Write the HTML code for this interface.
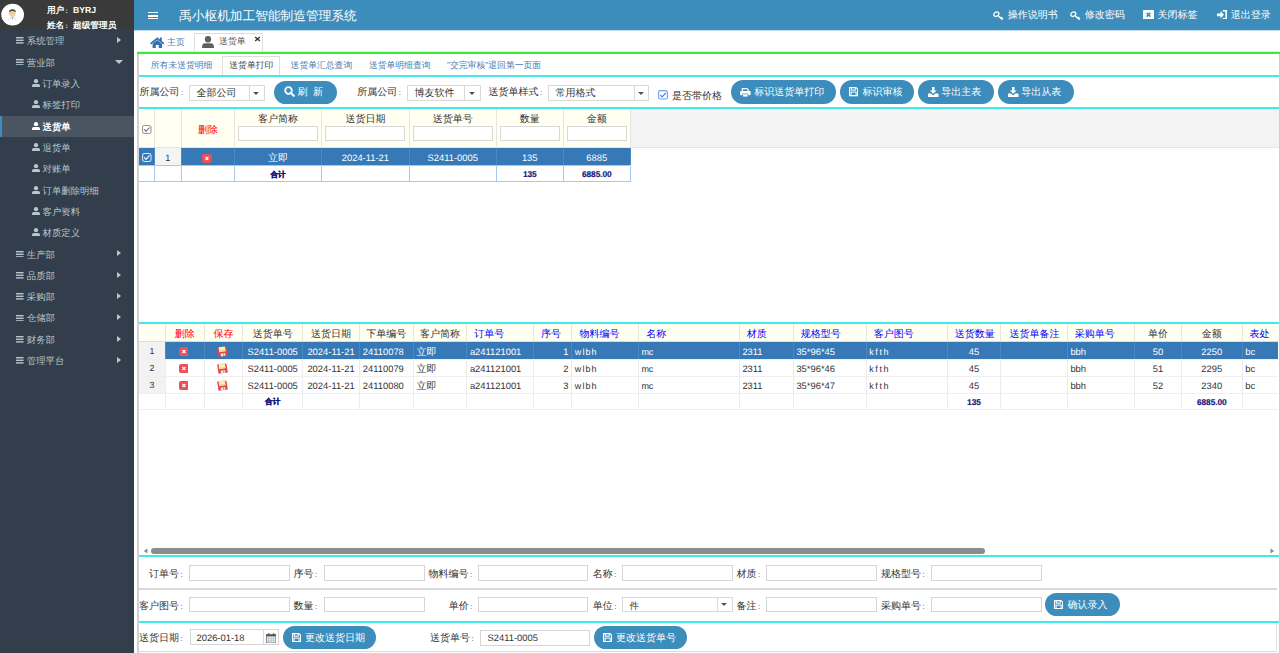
<!DOCTYPE html><html><head><meta charset="utf-8"><style>
*{box-sizing:border-box;margin:0;padding:0}
html,body{width:1280px;height:653px;overflow:hidden;background:#fff;font-family:"Liberation Sans",sans-serif;text-rendering:geometricPrecision}
.a{position:absolute}
.t{position:absolute;white-space:nowrap;line-height:1}
.c{display:inline-block;width:1.333em;padding-left:.2em;font-size:.75em}
.ham{position:absolute;width:7.5px;height:6.4px;border-top:1.5px solid #b8c7ce;border-bottom:1.5px solid #b8c7ce}
.ham:after{content:"";position:absolute;left:0;right:0;top:0.95px;height:1.5px;background:#b8c7ce}
.arr{position:absolute;width:0;height:0;border-top:3.6px solid transparent;border-bottom:3.6px solid transparent;border-left:4.2px solid #b8c7ce}
.arrd{position:absolute;width:0;height:0;border-left:4.2px solid transparent;border-right:4.2px solid transparent;border-top:4.2px solid #b8c7ce}
.sel{position:absolute;background:#fff;border:1px solid #d9d9d9}
.sel .sp{position:absolute;top:0;bottom:0;border-left:1px solid #d9d9d9}
.tri{position:absolute;width:0;height:0;border-left:3.6px solid transparent;border-right:3.6px solid transparent;border-top:3.6px solid #555}
.btn{position:absolute;background:#3c8dbc;border-radius:12px}
.cy{position:absolute;height:2.4px;background:#3eeaea}
.inp{position:absolute;background:#fff;border:1px solid #d5d5d5}
</style></head><body>
<div class="a" style="left:0.00px;top:0.00px;width:134.00px;height:653.00px;background:#323e4b"></div>
<div class="a" style="left:0.00px;top:0.00px;width:134.00px;height:30.00px;background:#3a3a3a"></div>
<svg class="a" style="left:0;top:0" width="30" height="30" viewBox="0 0 30 30">
<ellipse cx="12.6" cy="14.6" rx="11.4" ry="10.9" fill="#fff"/>
<path d="M8.3 20.6 Q9 17.6 12.4 17.4 Q15.8 17.6 16.5 20.6" fill="none" stroke="#d8dde0" stroke-width="0.9"/>
<path d="M11.8 17.6 L12.4 20.2 L13 17.6Z" fill="#3a9ab8"/>
<ellipse cx="12.4" cy="13.6" rx="3.3" ry="3.7" fill="#f1d2b2"/>
<path d="M9 12.6 Q8.8 9.2 12.4 9.2 Q16 9.2 15.8 12.6 Q15.2 10.9 12.4 11 Q9.6 10.9 9 12.6Z" fill="#5a4030"/>
<path d="M10.6 13.2 H11.6 M13.2 13.2 H14.2" stroke="#a08070" stroke-width="0.5"/>
</svg>
<div class="t" style="left:46.90px;top:6px;font-size:8.7px;color:#fff;font-weight:bold">用户<span class="c">:</span>BYRJ</div>
<div class="t" style="left:46.90px;top:21px;font-size:8.7px;color:#fff;font-weight:bold">姓名<span class="c">:</span>超级管理员</div>
<svg class="a" style="left:16.1px;top:37.40px" width="7.6" height="6.6" viewBox="0 0 7.6 6.6"><rect x="0" y="0" width="7.6" height="1.4" fill="#b8c7ce"/><rect x="0" y="2.6" width="7.6" height="1.4" fill="#b8c7ce"/><rect x="0" y="5.2" width="7.6" height="1.4" fill="#b8c7ce"/></svg>
<div class="t" style="left:26.80px;top:36px;font-size:9.4px;color:#b8c7ce;">系统管理</div>
<div class="arr" style="left:116.8px;top:37.10px"></div>
<svg class="a" style="left:16.1px;top:58.73px" width="7.6" height="6.6" viewBox="0 0 7.6 6.6"><rect x="0" y="0" width="7.6" height="1.4" fill="#b8c7ce"/><rect x="0" y="2.6" width="7.6" height="1.4" fill="#b8c7ce"/><rect x="0" y="5.2" width="7.6" height="1.4" fill="#b8c7ce"/></svg>
<div class="t" style="left:26.80px;top:58px;font-size:9.4px;color:#b8c7ce;">营业部</div>
<div class="arrd" style="left:115.3px;top:60.43px"></div>
<svg class="a" style="left:32.00px;top:78.91px" width="8" height="8.2" viewBox="0 0 8 8.2"><circle cx="4" cy="2.15" r="2.15" fill="#b8c7ce"/><path d="M0 8.2 V6.6 Q0 4.9 1.8 4.9 H6.2 Q8 4.9 8 6.6 V8.2Z" fill="#b8c7ce"/></svg>
<div class="t" style="left:42.50px;top:79px;font-size:9.4px;color:#b8c7ce;">订单录入</div>
<svg class="a" style="left:32.00px;top:100.24px" width="8" height="8.2" viewBox="0 0 8 8.2"><circle cx="4" cy="2.15" r="2.15" fill="#b8c7ce"/><path d="M0 8.2 V6.6 Q0 4.9 1.8 4.9 H6.2 Q8 4.9 8 6.6 V8.2Z" fill="#b8c7ce"/></svg>
<div class="t" style="left:42.50px;top:100px;font-size:9.4px;color:#b8c7ce;">标签打印</div>
<div class="a" style="left:0.00px;top:115.70px;width:134.00px;height:21.60px;background:#4a5562"></div>
<div class="a" style="left:0.00px;top:115.70px;width:2.20px;height:21.60px;background:#3c8dbc"></div>
<svg class="a" style="left:32.00px;top:121.57px" width="8" height="8.2" viewBox="0 0 8 8.2"><circle cx="4" cy="2.15" r="2.15" fill="#fff"/><path d="M0 8.2 V6.6 Q0 4.9 1.8 4.9 H6.2 Q8 4.9 8 6.6 V8.2Z" fill="#fff"/></svg>
<div class="t" style="left:42.50px;top:122px;font-size:9.4px;color:#fff;font-weight:bold">送货单</div>
<svg class="a" style="left:32.00px;top:142.90px" width="8" height="8.2" viewBox="0 0 8 8.2"><circle cx="4" cy="2.15" r="2.15" fill="#b8c7ce"/><path d="M0 8.2 V6.6 Q0 4.9 1.8 4.9 H6.2 Q8 4.9 8 6.6 V8.2Z" fill="#b8c7ce"/></svg>
<div class="t" style="left:42.50px;top:143px;font-size:9.4px;color:#b8c7ce;">退货单</div>
<svg class="a" style="left:32.00px;top:164.23px" width="8" height="8.2" viewBox="0 0 8 8.2"><circle cx="4" cy="2.15" r="2.15" fill="#b8c7ce"/><path d="M0 8.2 V6.6 Q0 4.9 1.8 4.9 H6.2 Q8 4.9 8 6.6 V8.2Z" fill="#b8c7ce"/></svg>
<div class="t" style="left:42.50px;top:164px;font-size:9.4px;color:#b8c7ce;">对账单</div>
<svg class="a" style="left:32.00px;top:185.56px" width="8" height="8.2" viewBox="0 0 8 8.2"><circle cx="4" cy="2.15" r="2.15" fill="#b8c7ce"/><path d="M0 8.2 V6.6 Q0 4.9 1.8 4.9 H6.2 Q8 4.9 8 6.6 V8.2Z" fill="#b8c7ce"/></svg>
<div class="t" style="left:42.50px;top:186px;font-size:9.4px;color:#b8c7ce;">订单删除明细</div>
<svg class="a" style="left:32.00px;top:206.89px" width="8" height="8.2" viewBox="0 0 8 8.2"><circle cx="4" cy="2.15" r="2.15" fill="#b8c7ce"/><path d="M0 8.2 V6.6 Q0 4.9 1.8 4.9 H6.2 Q8 4.9 8 6.6 V8.2Z" fill="#b8c7ce"/></svg>
<div class="t" style="left:42.50px;top:207px;font-size:9.4px;color:#b8c7ce;">客户资料</div>
<svg class="a" style="left:32.00px;top:228.22px" width="8" height="8.2" viewBox="0 0 8 8.2"><circle cx="4" cy="2.15" r="2.15" fill="#b8c7ce"/><path d="M0 8.2 V6.6 Q0 4.9 1.8 4.9 H6.2 Q8 4.9 8 6.6 V8.2Z" fill="#b8c7ce"/></svg>
<div class="t" style="left:42.50px;top:228px;font-size:9.4px;color:#b8c7ce;">材质定义</div>
<svg class="a" style="left:16.1px;top:250.70px" width="7.6" height="6.6" viewBox="0 0 7.6 6.6"><rect x="0" y="0" width="7.6" height="1.4" fill="#b8c7ce"/><rect x="0" y="2.6" width="7.6" height="1.4" fill="#b8c7ce"/><rect x="0" y="5.2" width="7.6" height="1.4" fill="#b8c7ce"/></svg>
<div class="t" style="left:26.80px;top:250px;font-size:9.4px;color:#b8c7ce;">生产部</div>
<div class="arr" style="left:116.8px;top:250.40px"></div>
<svg class="a" style="left:16.1px;top:272.03px" width="7.6" height="6.6" viewBox="0 0 7.6 6.6"><rect x="0" y="0" width="7.6" height="1.4" fill="#b8c7ce"/><rect x="0" y="2.6" width="7.6" height="1.4" fill="#b8c7ce"/><rect x="0" y="5.2" width="7.6" height="1.4" fill="#b8c7ce"/></svg>
<div class="t" style="left:26.80px;top:271px;font-size:9.4px;color:#b8c7ce;">品质部</div>
<div class="arr" style="left:116.8px;top:271.73px"></div>
<svg class="a" style="left:16.1px;top:293.36px" width="7.6" height="6.6" viewBox="0 0 7.6 6.6"><rect x="0" y="0" width="7.6" height="1.4" fill="#b8c7ce"/><rect x="0" y="2.6" width="7.6" height="1.4" fill="#b8c7ce"/><rect x="0" y="5.2" width="7.6" height="1.4" fill="#b8c7ce"/></svg>
<div class="t" style="left:26.80px;top:292px;font-size:9.4px;color:#b8c7ce;">采购部</div>
<div class="arr" style="left:116.8px;top:293.06px"></div>
<svg class="a" style="left:16.1px;top:314.69px" width="7.6" height="6.6" viewBox="0 0 7.6 6.6"><rect x="0" y="0" width="7.6" height="1.4" fill="#b8c7ce"/><rect x="0" y="2.6" width="7.6" height="1.4" fill="#b8c7ce"/><rect x="0" y="5.2" width="7.6" height="1.4" fill="#b8c7ce"/></svg>
<div class="t" style="left:26.80px;top:313px;font-size:9.4px;color:#b8c7ce;">仓储部</div>
<div class="arr" style="left:116.8px;top:314.39px"></div>
<svg class="a" style="left:16.1px;top:336.02px" width="7.6" height="6.6" viewBox="0 0 7.6 6.6"><rect x="0" y="0" width="7.6" height="1.4" fill="#b8c7ce"/><rect x="0" y="2.6" width="7.6" height="1.4" fill="#b8c7ce"/><rect x="0" y="5.2" width="7.6" height="1.4" fill="#b8c7ce"/></svg>
<div class="t" style="left:26.80px;top:335px;font-size:9.4px;color:#b8c7ce;">财务部</div>
<div class="arr" style="left:116.8px;top:335.72px"></div>
<svg class="a" style="left:16.1px;top:357.35px" width="7.6" height="6.6" viewBox="0 0 7.6 6.6"><rect x="0" y="0" width="7.6" height="1.4" fill="#b8c7ce"/><rect x="0" y="2.6" width="7.6" height="1.4" fill="#b8c7ce"/><rect x="0" y="5.2" width="7.6" height="1.4" fill="#b8c7ce"/></svg>
<div class="t" style="left:26.80px;top:356px;font-size:9.4px;color:#b8c7ce;">管理平台</div>
<div class="arr" style="left:116.8px;top:357.05px"></div>
<div class="a" style="left:134.00px;top:0.00px;width:1146.00px;height:30.00px;background:#3c8dbc"></div>
<div class="a" style="left:134.00px;top:30.00px;width:1146.00px;height:1.00px;background:#c4dbec"></div>
<div class="a" style="left:148px;top:12.2px;width:10px;height:7.2px;border-top:1.7px solid #fff;border-bottom:1.7px solid #fff"></div>
<div class="a" style="left:148.00px;top:14.95px;width:10.00px;height:1.70px;background:#fff"></div>
<div class="t" style="left:179.10px;top:10px;font-size:12.7px;color:#fff;">禹小枢机加工智能制造管理系统</div>
<svg class="a" style="left:992.80px;top:10.60px" width="11" height="9.6" viewBox="0 0 11 9.6"><ellipse cx="3.3" cy="3.2" rx="2.7" ry="2.0" transform="rotate(-35 3.3 3.2)" fill="none" stroke="#fff" stroke-width="1.3"/><path d="M4.9 4.6 L9.6 8.9 M7.5 7 L8.7 5.9 M8.6 8 L9.9 6.9" stroke="#fff" stroke-width="1.4"/></svg>
<div class="t" style="left:1007.80px;top:11px;font-size:10.0px;color:#fff;">操作说明书</div>
<svg class="a" style="left:1069.80px;top:10.60px" width="11" height="9.6" viewBox="0 0 11 9.6"><ellipse cx="3.3" cy="3.2" rx="2.7" ry="2.0" transform="rotate(-35 3.3 3.2)" fill="none" stroke="#fff" stroke-width="1.3"/><path d="M4.9 4.6 L9.6 8.9 M7.5 7 L8.7 5.9 M8.6 8 L9.9 6.9" stroke="#fff" stroke-width="1.4"/></svg>
<div class="t" style="left:1084.80px;top:11px;font-size:10.0px;color:#fff;">修改密码</div>
<svg class="a" style="left:1142.9px;top:9.8px" width="11" height="9.4" viewBox="0 0 11 9.4"><rect x="0" y="0" width="11" height="9.4" rx="1" fill="#fff"/><path d="M3.6 2.8 L7.4 6.6 M7.4 2.8 L3.6 6.6" stroke="#3c8dbc" stroke-width="1.6"/></svg>
<div class="t" style="left:1157.40px;top:11px;font-size:10.0px;color:#fff;">关闭标签</div>
<svg class="a" style="left:1216.7px;top:9.8px" width="10" height="9.6" viewBox="0 0 10 9.6"><path d="M0 3.4 H3.6 V1.1 L7 4.8 L3.6 8.5 V6.2 H0Z" fill="#fff"/><path d="M5.8 0.8 H9.2 V8.8 H5.8" fill="none" stroke="#fff" stroke-width="1.6"/></svg>
<div class="t" style="left:1230.80px;top:11px;font-size:10.0px;color:#fff;">退出登录</div>
<svg class="a" style="left:149.7px;top:36.8px" width="14.6" height="11" viewBox="0 0 14.6 11"><path d="M7.3 0.2 L0 6.2 L1.3 7.5 L7.3 2.6 L13.3 7.5 L14.6 6.2 L11.8 3.9 V0.6 H10 V2.4Z" fill="#2f73b5"/><path d="M2.6 6.8 L7.3 3 L12 6.8 V11 H8.8 V8 H5.8 V11 H2.6Z" fill="#2f73b5"/></svg>
<div class="t" style="left:167.00px;top:38px;font-size:8.9px;color:#5a80ab;">主页</div>
<div class="a" style="left:194.20px;top:33.30px;width:69.10px;height:18.90px;background:#fff;border:1px solid #dedede;border-bottom:none"></div>
<svg class="a" style="left:202.4px;top:36.1px" width="12" height="12.2" viewBox="0 0 12 12.2"><ellipse cx="6" cy="3.2" rx="3.1" ry="3.2" fill="#5f5f5f"/><path d="M0.1 12.2 V10.6 Q0.1 7.2 3.3 7.2 H8.7 Q11.9 7.2 11.9 10.6 V12.2Z" fill="#5f5f5f"/></svg>
<div class="t" style="left:219.00px;top:37px;font-size:8.9px;color:#555;">送货单</div>
<svg class="a" style="left:254px;top:36px" width="7" height="6" viewBox="0 0 7 6"><path d="M1.2 1 L5.8 5 M5.8 1 L1.2 5" stroke="#3a3a3a" stroke-width="1.5"/></svg>
<div class="a" style="left:136.90px;top:52.00px;width:1.80px;height:601.00px;background:#d2d2d2"></div>
<div class="a" style="left:1279.00px;top:54.00px;width:1.00px;height:599.00px;background:#cfcfcf"></div>
<div class="a" style="left:137.00px;top:51.00px;width:1142.50px;height:1.00px;background:#ece8e8"></div>
<div class="a" style="left:137.00px;top:52.00px;width:1142.50px;height:2.00px;background:#33ee33"></div>
<div class="t" style="left:150.80px;top:61px;font-size:8.8px;color:#4a7cb4;">所有未送货明细</div>
<div class="a" style="left:222.00px;top:56.30px;width:57.70px;height:19.70px;background:#fff;border:1px solid #dedede;border-bottom:none"></div>
<div class="t" style="left:229.30px;top:61px;font-size:8.8px;color:#444;">送货单打印</div>
<div class="t" style="left:290.60px;top:61px;font-size:8.8px;color:#4a7cb4;">送货单汇总查询</div>
<div class="t" style="left:368.90px;top:61px;font-size:8.8px;color:#4a7cb4;">送货单明细查询</div>
<div class="t" style="left:446.90px;top:61px;font-size:8.8px;color:#4a7cb4;">"交完审核"退回第一页面</div>
<div class="cy" style="left:138.7px;top:75.1px;width:1140.3px"></div>
<div class="t" style="left:139.50px;top:88px;font-size:10.0px;color:#333;">所属公司<span class="c">:</span></div>
<div class="sel" style="left:189.00px;top:85.30px;width:76.30px;height:15.70px"><div class="sp" style="left:58.80px"></div><div class="tri" style="left:63.45px;top:5.25px"></div></div>
<div class="t" style="left:196.50px;top:89px;font-size:10.0px;color:#333;">全部公司</div>
<div class="btn" style="left:273.80px;top:80.50px;width:63.00px;height:23.50px"></div>
<svg class="a" style="left:284.40px;top:86.45px" width="11" height="11" viewBox="0 0 11 11"><circle cx="4.5" cy="4.5" r="3.3" fill="none" stroke="#fff" stroke-width="1.8"/><path d="M7 7 L9.8 9.8" stroke="#fff" stroke-width="2.1" stroke-linecap="round"/></svg>
<div class="t" style="left:297.50px;top:88px;font-size:10.0px;color:#fff;">刷&nbsp;&nbsp;新</div>
<div class="t" style="left:357.20px;top:88px;font-size:10.0px;color:#333;">所属公司<span class="c">:</span></div>
<div class="sel" style="left:407.20px;top:85.30px;width:73.40px;height:15.70px"><div class="sp" style="left:56.20px"></div><div class="tri" style="left:60.70px;top:5.25px"></div></div>
<div class="t" style="left:414.50px;top:89px;font-size:10.0px;color:#333;">博友软件</div>
<div class="t" style="left:488.40px;top:88px;font-size:10.0px;color:#333;">送货单样式<span class="c">:</span></div>
<div class="sel" style="left:548.40px;top:85.30px;width:101.00px;height:15.70px"><div class="sp" style="left:84.35px"></div><div class="tri" style="left:88.58px;top:5.25px"></div></div>
<div class="t" style="left:555.50px;top:89px;font-size:10.0px;color:#333;">常用格式</div>
<svg class="a" style="left:657.8px;top:90.2px" width="10" height="9.6" viewBox="0 0 10 9.6"><rect x="0.6" y="0.6" width="8.8" height="8.4" rx="1.8" fill="#fff" stroke="#6f9cf0" stroke-width="1.1"/><path d="M2.3 5 L4.2 6.9 L7.8 2.9" fill="none" stroke="#4a82e0" stroke-width="1.2"/></svg>
<div class="t" style="left:671.90px;top:92px;font-size:10.0px;color:#333;">是否带价格</div>
<div class="btn" style="left:730.90px;top:80.20px;width:105.35px;height:23.60px"></div>
<svg class="a" style="left:739.90px;top:87.60px" width="10.7" height="9.2" viewBox="0 0 10.7 9.2"><path d="M2.4 3.2 V0.6 H7 L8.3 1.9 V3.2" fill="none" stroke="#fff" stroke-width="1.2"/><rect x="0" y="3" width="10.7" height="4.3" rx="1.3" fill="#fff"/><rect x="2.4" y="5.6" width="5.9" height="3.6" fill="#3c8dbc"/><rect x="3.1" y="6.3" width="4.5" height="2.3" fill="#fff"/></svg>
<div class="t" style="left:754.20px;top:88px;font-size:10.0px;color:#fff;">标识送货单打印</div>
<div class="btn" style="left:839.70px;top:80.20px;width:74.70px;height:23.60px"></div>
<svg class="a" style="left:849.20px;top:87.40px" width="9.2" height="9.2" viewBox="0 0 9.2 9.2"><path d="M0.6 0.6 H7 L8.6 2.2 V8.6 H0.6Z" fill="none" stroke="#fff" stroke-width="1.2"/><rect x="2.4" y="0.6" width="3.9" height="2.6" fill="none" stroke="#fff" stroke-width="1"/><rect x="2.1" y="5.1" width="5" height="3.5" fill="none" stroke="#fff" stroke-width="1"/></svg>
<div class="t" style="left:862.50px;top:88px;font-size:10.0px;color:#fff;">标识审核</div>
<div class="btn" style="left:917.80px;top:80.20px;width:76.60px;height:23.60px"></div>
<svg class="a" style="left:928.00px;top:86.70px" width="10.5" height="10" viewBox="0 0 10.5 10"><path d="M4 0 H6.5 V3.4 H8.6 L5.25 6.8 L1.9 3.4 H4Z" fill="#fff"/><path d="M0 6.4 H3.1 L5.25 8.5 L7.4 6.4 H10.5 V10 H0Z" fill="#fff"/></svg>
<div class="t" style="left:941.30px;top:88px;font-size:10.0px;color:#fff;">导出主表</div>
<div class="btn" style="left:997.80px;top:80.20px;width:76.20px;height:23.60px"></div>
<svg class="a" style="left:1008.00px;top:86.70px" width="10.5" height="10" viewBox="0 0 10.5 10"><path d="M4 0 H6.5 V3.4 H8.6 L5.25 6.8 L1.9 3.4 H4Z" fill="#fff"/><path d="M0 6.4 H3.1 L5.25 8.5 L7.4 6.4 H10.5 V10 H0Z" fill="#fff"/></svg>
<div class="t" style="left:1021.30px;top:88px;font-size:10.0px;color:#fff;">导出从表</div>
<div class="cy" style="left:138.7px;top:106.6px;width:1140.3px"></div>
<div class="a" style="left:138.70px;top:109.00px;width:1140.30px;height:39.00px;background:#f3f3f3"></div>
<div class="a" style="left:138.70px;top:109.00px;width:491.70px;height:39.00px;background:#fffff2"></div>
<div class="a" style="left:153.80px;top:109.00px;width:1.00px;height:39.00px;background:#e6e6dc"></div>
<div class="a" style="left:180.80px;top:109.00px;width:1.00px;height:39.00px;background:#e6e6dc"></div>
<div class="a" style="left:234.00px;top:109.00px;width:1.00px;height:39.00px;background:#e6e6dc"></div>
<div class="a" style="left:321.20px;top:109.00px;width:1.00px;height:39.00px;background:#e6e6dc"></div>
<div class="a" style="left:408.60px;top:109.00px;width:1.00px;height:39.00px;background:#e6e6dc"></div>
<div class="a" style="left:495.80px;top:109.00px;width:1.00px;height:39.00px;background:#e6e6dc"></div>
<div class="a" style="left:562.70px;top:109.00px;width:1.00px;height:39.00px;background:#e6e6dc"></div>
<div class="a" style="left:629.90px;top:109.00px;width:1.00px;height:39.00px;background:#e6e6dc"></div>
<div class="a" style="left:138.70px;top:147.00px;width:1140.30px;height:1.00px;background:#e6e6dc"></div>
<svg class="a" style="left:142px;top:124.6px" width="9.6" height="9" viewBox="0 0 10 9.4"><rect x="0.6" y="0.6" width="8.8" height="8.2" rx="1.6" fill="#fff" stroke="#8a8a8a" stroke-width="1"/><path d="M2.3 4.6 L4.2 6.6 L7.8 2.6" fill="none" stroke="#666" stroke-width="1.1"/></svg>
<div class="t" style="left:181.30px;top:126px;font-size:10.0px;color:#f00;width:53.20px;text-align:center;">删除</div>
<div class="t" style="left:234.50px;top:115px;font-size:10.0px;color:#333;width:87.20px;text-align:center;">客户简称</div>
<div class="inp" style="left:238.20px;top:126.4px;width:79.80px;height:14.8px;border-color:#d8d8d8"></div>
<div class="t" style="left:321.70px;top:115px;font-size:10.0px;color:#333;width:87.40px;text-align:center;">送货日期</div>
<div class="inp" style="left:325.40px;top:126.4px;width:80.00px;height:14.8px;border-color:#d8d8d8"></div>
<div class="t" style="left:409.10px;top:115px;font-size:10.0px;color:#333;width:87.20px;text-align:center;">送货单号</div>
<div class="inp" style="left:412.80px;top:126.4px;width:79.80px;height:14.8px;border-color:#d8d8d8"></div>
<div class="t" style="left:496.30px;top:115px;font-size:10.0px;color:#333;width:66.90px;text-align:center;">数量</div>
<div class="inp" style="left:500.00px;top:126.4px;width:59.50px;height:14.8px;border-color:#d8d8d8"></div>
<div class="t" style="left:563.20px;top:115px;font-size:10.0px;color:#333;width:67.20px;text-align:center;">金额</div>
<div class="inp" style="left:566.90px;top:126.4px;width:59.80px;height:14.8px;border-color:#d8d8d8"></div>
<div class="a" style="left:138.70px;top:148.00px;width:491.70px;height:17.00px;background:#3779b7"></div>
<div class="a" style="left:154.80px;top:148.00px;width:26.30px;height:17.00px;background:#f4f4f4"></div>
<div class="a" style="left:153.80px;top:148.00px;width:1.00px;height:17.00px;background:#4a88c2"></div>
<div class="a" style="left:180.80px;top:148.00px;width:1.00px;height:17.00px;background:#4a88c2"></div>
<div class="a" style="left:234.00px;top:148.00px;width:1.00px;height:17.00px;background:#4a88c2"></div>
<div class="a" style="left:321.20px;top:148.00px;width:1.00px;height:17.00px;background:#4a88c2"></div>
<div class="a" style="left:408.60px;top:148.00px;width:1.00px;height:17.00px;background:#4a88c2"></div>
<div class="a" style="left:495.80px;top:148.00px;width:1.00px;height:17.00px;background:#4a88c2"></div>
<div class="a" style="left:562.70px;top:148.00px;width:1.00px;height:17.00px;background:#4a88c2"></div>
<div class="a" style="left:629.90px;top:148.00px;width:1.00px;height:17.00px;background:#4a88c2"></div>
<div class="a" style="left:138.70px;top:165.00px;width:491.70px;height:1.00px;background:#a9c8e8"></div>
<svg class="a" style="left:142px;top:153px" width="9.6" height="9" viewBox="0 0 10 9.4"><rect x="0.6" y="0.6" width="8.8" height="8.2" rx="1.9" fill="none" stroke="#dfe9f4" stroke-width="1.1"/><path d="M2.3 4.6 L4.2 6.6 L7.8 2.6" fill="none" stroke="#fff" stroke-width="1.2"/></svg>
<div class="t" style="left:154.30px;top:154px;font-size:9.0px;color:#333;width:27.00px;text-align:center;">1</div>
<svg class="a" style="left:202.20px;top:153.60px" width="9.8" height="9" viewBox="0 0 9.8 9"><rect x="0" y="0" width="9.8" height="9" rx="2.1" fill="#ea5056"/><path d="M3.4 3 L6.4 6 M6.4 3 L3.4 6" stroke="#fff" stroke-width="1.1"/></svg>
<div class="t" style="left:234.50px;top:154px;font-size:10.0px;color:#fff;width:87.20px;text-align:center;">立即</div>
<div class="t" style="left:321.70px;top:153px;font-size:9.4px;color:#fff;width:87.40px;text-align:center;">2024-11-21</div>
<div class="t" style="left:409.10px;top:153px;font-size:9.4px;color:#fff;width:87.20px;text-align:center;">S2411-0005</div>
<div class="t" style="left:496.30px;top:153px;font-size:9.4px;color:#fff;width:66.90px;text-align:center;">135</div>
<div class="t" style="left:563.20px;top:153px;font-size:9.4px;color:#fff;width:67.20px;text-align:center;">6885</div>
<div class="a" style="left:138.70px;top:181.00px;width:491.70px;height:1.00px;background:#a9c8e8"></div>
<div class="a" style="left:153.70px;top:166.00px;width:1.20px;height:16.00px;background:#a9c8e8"></div>
<div class="a" style="left:180.70px;top:166.00px;width:1.20px;height:16.00px;background:#a9c8e8"></div>
<div class="a" style="left:233.90px;top:166.00px;width:1.20px;height:16.00px;background:#a9c8e8"></div>
<div class="a" style="left:321.10px;top:166.00px;width:1.20px;height:16.00px;background:#a9c8e8"></div>
<div class="a" style="left:408.50px;top:166.00px;width:1.20px;height:16.00px;background:#a9c8e8"></div>
<div class="a" style="left:495.70px;top:166.00px;width:1.20px;height:16.00px;background:#a9c8e8"></div>
<div class="a" style="left:562.60px;top:166.00px;width:1.20px;height:16.00px;background:#a9c8e8"></div>
<div class="a" style="left:629.80px;top:166.00px;width:1.20px;height:16.00px;background:#a9c8e8"></div>
<div class="t" style="left:234.50px;top:171px;font-size:7.6px;color:#141478;width:87.20px;text-align:center;font-weight:bold;-webkit-text-stroke:0.3px #141478">合计</div>
<div class="t" style="left:496.30px;top:170px;font-size:8.4px;color:#141478;width:66.90px;text-align:center;font-weight:bold;letter-spacing:-0.1px;-webkit-text-stroke:0.15px #141478">135</div>
<div class="t" style="left:563.20px;top:170px;font-size:8.4px;color:#141478;width:67.20px;text-align:center;font-weight:bold;letter-spacing:-0.1px;-webkit-text-stroke:0.15px #141478">6885.00</div>
<div class="cy" style="left:138.7px;top:321.9px;width:1140.3px"></div>
<div class="a" style="left:138px;top:324px;width:1139.6px;height:235px;overflow:hidden">
<div class="a" style="left:0.70px;top:0.30px;width:1161.30px;height:17.70px;background:#fffff2"></div>
<div class="a" style="left:0.70px;top:18.00px;width:26.50px;height:51.00px;background:#f2f2f2"></div>
<div class="a" style="left:27.20px;top:18.00px;width:1134.80px;height:17.00px;background:#3779b7"></div>
<div class="a" style="left:26.70px;top:0.30px;width:1.00px;height:17.70px;background:#e6e6dc"></div>
<div class="a" style="left:26.70px;top:35.00px;width:1.00px;height:50.00px;background:#ececec"></div>
<div class="a" style="left:26.70px;top:18.00px;width:1.00px;height:17.00px;background:#4a88c2"></div>
<div class="a" style="left:65.90px;top:0.30px;width:1.00px;height:17.70px;background:#e6e6dc"></div>
<div class="a" style="left:65.90px;top:35.00px;width:1.00px;height:50.00px;background:#ececec"></div>
<div class="a" style="left:65.90px;top:18.00px;width:1.00px;height:17.00px;background:#4a88c2"></div>
<div class="a" style="left:104.20px;top:0.30px;width:1.00px;height:17.70px;background:#e6e6dc"></div>
<div class="a" style="left:104.20px;top:35.00px;width:1.00px;height:50.00px;background:#ececec"></div>
<div class="a" style="left:104.20px;top:18.00px;width:1.00px;height:17.00px;background:#4a88c2"></div>
<div class="a" style="left:164.10px;top:0.30px;width:1.00px;height:17.70px;background:#e6e6dc"></div>
<div class="a" style="left:164.10px;top:35.00px;width:1.00px;height:50.00px;background:#ececec"></div>
<div class="a" style="left:164.10px;top:18.00px;width:1.00px;height:17.00px;background:#4a88c2"></div>
<div class="a" style="left:221.00px;top:0.30px;width:1.00px;height:17.70px;background:#e6e6dc"></div>
<div class="a" style="left:221.00px;top:35.00px;width:1.00px;height:50.00px;background:#ececec"></div>
<div class="a" style="left:221.00px;top:18.00px;width:1.00px;height:17.00px;background:#4a88c2"></div>
<div class="a" style="left:274.70px;top:0.30px;width:1.00px;height:17.70px;background:#e6e6dc"></div>
<div class="a" style="left:274.70px;top:35.00px;width:1.00px;height:50.00px;background:#ececec"></div>
<div class="a" style="left:274.70px;top:18.00px;width:1.00px;height:17.00px;background:#4a88c2"></div>
<div class="a" style="left:328.10px;top:0.30px;width:1.00px;height:17.70px;background:#e6e6dc"></div>
<div class="a" style="left:328.10px;top:35.00px;width:1.00px;height:50.00px;background:#ececec"></div>
<div class="a" style="left:328.10px;top:18.00px;width:1.00px;height:17.00px;background:#4a88c2"></div>
<div class="a" style="left:395.00px;top:0.30px;width:1.00px;height:17.70px;background:#e6e6dc"></div>
<div class="a" style="left:395.00px;top:35.00px;width:1.00px;height:50.00px;background:#ececec"></div>
<div class="a" style="left:395.00px;top:18.00px;width:1.00px;height:17.00px;background:#4a88c2"></div>
<div class="a" style="left:433.30px;top:0.30px;width:1.00px;height:17.70px;background:#e6e6dc"></div>
<div class="a" style="left:433.30px;top:35.00px;width:1.00px;height:50.00px;background:#ececec"></div>
<div class="a" style="left:433.30px;top:18.00px;width:1.00px;height:17.00px;background:#4a88c2"></div>
<div class="a" style="left:500.10px;top:0.30px;width:1.00px;height:17.70px;background:#e6e6dc"></div>
<div class="a" style="left:500.10px;top:35.00px;width:1.00px;height:50.00px;background:#ececec"></div>
<div class="a" style="left:500.10px;top:18.00px;width:1.00px;height:17.00px;background:#4a88c2"></div>
<div class="a" style="left:600.60px;top:0.30px;width:1.00px;height:17.70px;background:#e6e6dc"></div>
<div class="a" style="left:600.60px;top:35.00px;width:1.00px;height:50.00px;background:#ececec"></div>
<div class="a" style="left:600.60px;top:18.00px;width:1.00px;height:17.00px;background:#4a88c2"></div>
<div class="a" style="left:654.60px;top:0.30px;width:1.00px;height:17.70px;background:#e6e6dc"></div>
<div class="a" style="left:654.60px;top:35.00px;width:1.00px;height:50.00px;background:#ececec"></div>
<div class="a" style="left:654.60px;top:18.00px;width:1.00px;height:17.00px;background:#4a88c2"></div>
<div class="a" style="left:727.70px;top:0.30px;width:1.00px;height:17.70px;background:#e6e6dc"></div>
<div class="a" style="left:727.70px;top:35.00px;width:1.00px;height:50.00px;background:#ececec"></div>
<div class="a" style="left:727.70px;top:18.00px;width:1.00px;height:17.00px;background:#4a88c2"></div>
<div class="a" style="left:808.70px;top:0.30px;width:1.00px;height:17.70px;background:#e6e6dc"></div>
<div class="a" style="left:808.70px;top:35.00px;width:1.00px;height:50.00px;background:#ececec"></div>
<div class="a" style="left:808.70px;top:18.00px;width:1.00px;height:17.00px;background:#4a88c2"></div>
<div class="a" style="left:862.20px;top:0.30px;width:1.00px;height:17.70px;background:#e6e6dc"></div>
<div class="a" style="left:862.20px;top:35.00px;width:1.00px;height:50.00px;background:#ececec"></div>
<div class="a" style="left:862.20px;top:18.00px;width:1.00px;height:17.00px;background:#4a88c2"></div>
<div class="a" style="left:928.60px;top:0.30px;width:1.00px;height:17.70px;background:#e6e6dc"></div>
<div class="a" style="left:928.60px;top:35.00px;width:1.00px;height:50.00px;background:#ececec"></div>
<div class="a" style="left:928.60px;top:18.00px;width:1.00px;height:17.00px;background:#4a88c2"></div>
<div class="a" style="left:996.10px;top:0.30px;width:1.00px;height:17.70px;background:#e6e6dc"></div>
<div class="a" style="left:996.10px;top:35.00px;width:1.00px;height:50.00px;background:#ececec"></div>
<div class="a" style="left:996.10px;top:18.00px;width:1.00px;height:17.00px;background:#4a88c2"></div>
<div class="a" style="left:1043.00px;top:0.30px;width:1.00px;height:17.70px;background:#e6e6dc"></div>
<div class="a" style="left:1043.00px;top:35.00px;width:1.00px;height:50.00px;background:#ececec"></div>
<div class="a" style="left:1043.00px;top:18.00px;width:1.00px;height:17.00px;background:#4a88c2"></div>
<div class="a" style="left:1103.50px;top:0.30px;width:1.00px;height:17.70px;background:#e6e6dc"></div>
<div class="a" style="left:1103.50px;top:35.00px;width:1.00px;height:50.00px;background:#ececec"></div>
<div class="a" style="left:1103.50px;top:18.00px;width:1.00px;height:17.00px;background:#4a88c2"></div>
<div class="a" style="left:0.70px;top:35.00px;width:1161.30px;height:1.00px;background:#efefef"></div>
<div class="a" style="left:0.70px;top:52.00px;width:1161.30px;height:1.00px;background:#efefef"></div>
<div class="a" style="left:0.70px;top:69.00px;width:1161.30px;height:1.00px;background:#efefef"></div>
<div class="a" style="left:0.70px;top:85.00px;width:1161.30px;height:1.00px;background:#efefef"></div>
<div class="a" style="left:0.70px;top:17.00px;width:1161.30px;height:1.00px;background:#d6dde4"></div>
<div class="t" style="left:27.20px;top:6px;font-size:10.0px;color:#f00;width:39.20px;text-align:center;">删除</div>
<div class="t" style="left:66.40px;top:6px;font-size:10.0px;color:#f00;width:38.30px;text-align:center;">保存</div>
<div class="t" style="left:104.70px;top:6px;font-size:10.0px;color:#333;width:59.90px;text-align:center;">送货单号</div>
<div class="t" style="left:164.60px;top:6px;font-size:10.0px;color:#333;width:56.90px;text-align:center;">送货日期</div>
<div class="t" style="left:221.50px;top:6px;font-size:10.0px;color:#333;width:53.70px;text-align:center;">下单编号</div>
<div class="t" style="left:275.20px;top:6px;font-size:10.0px;color:#333;width:53.40px;text-align:center;">客户简称</div>
<div class="t" style="left:328.60px;top:6px;font-size:10.0px;color:#00f;width:66.90px;text-align:left;padding-left:7.60px;">订单号</div>
<div class="t" style="left:395.50px;top:6px;font-size:10.0px;color:#00f;width:38.30px;text-align:left;padding-left:7.60px;">序号</div>
<div class="t" style="left:433.80px;top:6px;font-size:10.0px;color:#00f;width:66.80px;text-align:left;padding-left:7.60px;">物料编号</div>
<div class="t" style="left:500.60px;top:6px;font-size:10.0px;color:#00f;width:100.50px;text-align:left;padding-left:7.60px;">名称</div>
<div class="t" style="left:601.10px;top:6px;font-size:10.0px;color:#00f;width:54.00px;text-align:left;padding-left:7.60px;">材质</div>
<div class="t" style="left:655.10px;top:6px;font-size:10.0px;color:#00f;width:73.10px;text-align:left;padding-left:7.60px;">规格型号</div>
<div class="t" style="left:728.20px;top:6px;font-size:10.0px;color:#00f;width:81.00px;text-align:left;padding-left:7.60px;">客户图号</div>
<div class="t" style="left:809.20px;top:6px;font-size:10.0px;color:#00f;width:53.50px;text-align:left;padding-left:7.60px;">送货数量</div>
<div class="t" style="left:862.70px;top:6px;font-size:10.0px;color:#00f;width:66.40px;text-align:left;padding-left:8.70px;">送货单备注</div>
<div class="t" style="left:929.10px;top:6px;font-size:10.0px;color:#00f;width:67.50px;text-align:left;padding-left:7.60px;">采购单号</div>
<div class="t" style="left:996.60px;top:6px;font-size:10.0px;color:#333;width:46.90px;text-align:center;">单价</div>
<div class="t" style="left:1043.50px;top:6px;font-size:10.0px;color:#333;width:60.50px;text-align:center;">金额</div>
<div class="t" style="left:1104.00px;top:6px;font-size:10.0px;color:#00f;width:58.00px;text-align:left;padding-left:7.60px;">表处</div>
<div class="t" style="left:0.70px;top:23px;font-size:8.8px;color:#333;width:26.50px;text-align:center;">1</div>
<svg class="a" style="left:40.70px;top:22.90px" width="9.8" height="9" viewBox="0 0 9.8 9"><rect x="0" y="0" width="9.8" height="9" rx="2.1" fill="#ea5056"/><path d="M3.4 3 L6.4 6 M6.4 3 L3.4 6" stroke="#fff" stroke-width="1.1"/></svg>
<svg class="a" style="left:78.55px;top:21.65px" width="11" height="11" viewBox="0 0 11 11"><g transform="rotate(-8 5.5 5.5)"><path d="M0.8 0.8 H8.8 L10.2 2.2 V10.2 H0.8Z" fill="#e5474d"/><rect x="2.2" y="0.8" width="6.4" height="5" fill="#f8eeb8"/><rect x="2.2" y="4.4" width="6.4" height="0.7" fill="#e8d890"/><rect x="3.4" y="7.4" width="4.4" height="2.8" fill="#eeeeee"/><rect x="5.6" y="7.8" width="1.2" height="2" fill="#999"/></g></svg>
<div class="t" style="left:104.70px;top:23px;font-size:9.4px;color:#fff;width:59.90px;text-align:center;">S2411-0005</div>
<div class="t" style="left:164.60px;top:23px;font-size:9.4px;color:#fff;width:56.90px;text-align:center;">2024-11-21</div>
<div class="t" style="left:221.50px;top:23px;font-size:9.4px;color:#fff;width:53.70px;text-align:left;padding-left:3.30px;">24110078</div>
<div class="t" style="left:275.20px;top:24px;font-size:10.0px;color:#fff;width:53.40px;text-align:left;padding-left:3.30px;">立即</div>
<div class="t" style="left:328.60px;top:23px;font-size:9.4px;color:#fff;width:66.90px;text-align:left;padding-left:3.30px;">a241121001</div>
<div class="t" style="left:395.50px;top:23px;font-size:9.4px;color:#fff;width:38.30px;text-align:right;padding-right:3.40px;">1</div>
<div class="t" style="left:433.80px;top:24px;font-size:9.0px;color:#fff;width:66.80px;text-align:left;padding-left:3.00px;letter-spacing:1.1px">wlbh</div>
<div class="t" style="left:500.60px;top:24px;font-size:9.0px;color:#fff;width:100.50px;text-align:left;padding-left:3.00px;letter-spacing:-0.4px">mc</div>
<div class="t" style="left:601.10px;top:23px;font-size:9.4px;color:#fff;width:54.00px;text-align:left;padding-left:3.30px;">2311</div>
<div class="t" style="left:655.10px;top:23px;font-size:9.4px;color:#fff;width:73.10px;text-align:left;padding-left:3.30px;">35*96*45</div>
<div class="t" style="left:728.20px;top:24px;font-size:9.0px;color:#fff;width:81.00px;text-align:left;padding-left:3.00px;letter-spacing:1.6px">kfth</div>
<div class="t" style="left:809.20px;top:23px;font-size:9.4px;color:#fff;width:53.50px;text-align:center;">45</div>
<div class="t" style="left:929.10px;top:23px;font-size:9.4px;color:#fff;width:67.50px;text-align:left;padding-left:3.30px;">bbh</div>
<div class="t" style="left:996.60px;top:23px;font-size:9.4px;color:#fff;width:46.90px;text-align:center;">50</div>
<div class="t" style="left:1043.50px;top:23px;font-size:9.4px;color:#fff;width:60.50px;text-align:center;">2250</div>
<div class="t" style="left:1104.00px;top:23px;font-size:9.4px;color:#fff;width:58.00px;text-align:left;padding-left:3.30px;">bc</div>
<div class="t" style="left:0.70px;top:40px;font-size:8.8px;color:#333;width:26.50px;text-align:center;">2</div>
<svg class="a" style="left:40.70px;top:39.90px" width="9.8" height="9" viewBox="0 0 9.8 9"><rect x="0" y="0" width="9.8" height="9" rx="2.1" fill="#ea5056"/><path d="M3.4 3 L6.4 6 M6.4 3 L3.4 6" stroke="#fff" stroke-width="1.1"/></svg>
<svg class="a" style="left:78.55px;top:38.65px" width="11" height="11" viewBox="0 0 11 11"><g transform="rotate(-8 5.5 5.5)"><path d="M0.8 0.8 H8.8 L10.2 2.2 V10.2 H0.8Z" fill="#e5474d"/><rect x="2.2" y="0.8" width="6.4" height="5" fill="#f8eeb8"/><rect x="2.2" y="4.4" width="6.4" height="0.7" fill="#e8d890"/><rect x="3.4" y="7.4" width="4.4" height="2.8" fill="#eeeeee"/><rect x="5.6" y="7.8" width="1.2" height="2" fill="#999"/></g></svg>
<div class="t" style="left:104.70px;top:40px;font-size:9.4px;color:#333;width:59.90px;text-align:center;">S2411-0005</div>
<div class="t" style="left:164.60px;top:40px;font-size:9.4px;color:#333;width:56.90px;text-align:center;">2024-11-21</div>
<div class="t" style="left:221.50px;top:40px;font-size:9.4px;color:#333;width:53.70px;text-align:left;padding-left:3.30px;">24110079</div>
<div class="t" style="left:275.20px;top:41px;font-size:10.0px;color:#333;width:53.40px;text-align:left;padding-left:3.30px;">立即</div>
<div class="t" style="left:328.60px;top:40px;font-size:9.4px;color:#333;width:66.90px;text-align:left;padding-left:3.30px;">a241121001</div>
<div class="t" style="left:395.50px;top:40px;font-size:9.4px;color:#333;width:38.30px;text-align:right;padding-right:3.40px;">2</div>
<div class="t" style="left:433.80px;top:41px;font-size:9.0px;color:#333;width:66.80px;text-align:left;padding-left:3.00px;letter-spacing:1.1px">wlbh</div>
<div class="t" style="left:500.60px;top:41px;font-size:9.0px;color:#333;width:100.50px;text-align:left;padding-left:3.00px;letter-spacing:-0.4px">mc</div>
<div class="t" style="left:601.10px;top:40px;font-size:9.4px;color:#333;width:54.00px;text-align:left;padding-left:3.30px;">2311</div>
<div class="t" style="left:655.10px;top:40px;font-size:9.4px;color:#333;width:73.10px;text-align:left;padding-left:3.30px;">35*96*46</div>
<div class="t" style="left:728.20px;top:41px;font-size:9.0px;color:#333;width:81.00px;text-align:left;padding-left:3.00px;letter-spacing:1.6px">kfth</div>
<div class="t" style="left:809.20px;top:40px;font-size:9.4px;color:#333;width:53.50px;text-align:center;">45</div>
<div class="t" style="left:929.10px;top:40px;font-size:9.4px;color:#333;width:67.50px;text-align:left;padding-left:3.30px;">bbh</div>
<div class="t" style="left:996.60px;top:40px;font-size:9.4px;color:#333;width:46.90px;text-align:center;">51</div>
<div class="t" style="left:1043.50px;top:40px;font-size:9.4px;color:#333;width:60.50px;text-align:center;">2295</div>
<div class="t" style="left:1104.00px;top:40px;font-size:9.4px;color:#333;width:58.00px;text-align:left;padding-left:3.30px;">bc</div>
<div class="t" style="left:0.70px;top:57px;font-size:8.8px;color:#333;width:26.50px;text-align:center;">3</div>
<svg class="a" style="left:40.70px;top:56.90px" width="9.8" height="9" viewBox="0 0 9.8 9"><rect x="0" y="0" width="9.8" height="9" rx="2.1" fill="#ea5056"/><path d="M3.4 3 L6.4 6 M6.4 3 L3.4 6" stroke="#fff" stroke-width="1.1"/></svg>
<svg class="a" style="left:78.55px;top:55.65px" width="11" height="11" viewBox="0 0 11 11"><g transform="rotate(-8 5.5 5.5)"><path d="M0.8 0.8 H8.8 L10.2 2.2 V10.2 H0.8Z" fill="#e5474d"/><rect x="2.2" y="0.8" width="6.4" height="5" fill="#f8eeb8"/><rect x="2.2" y="4.4" width="6.4" height="0.7" fill="#e8d890"/><rect x="3.4" y="7.4" width="4.4" height="2.8" fill="#eeeeee"/><rect x="5.6" y="7.8" width="1.2" height="2" fill="#999"/></g></svg>
<div class="t" style="left:104.70px;top:57px;font-size:9.4px;color:#333;width:59.90px;text-align:center;">S2411-0005</div>
<div class="t" style="left:164.60px;top:57px;font-size:9.4px;color:#333;width:56.90px;text-align:center;">2024-11-21</div>
<div class="t" style="left:221.50px;top:57px;font-size:9.4px;color:#333;width:53.70px;text-align:left;padding-left:3.30px;">24110080</div>
<div class="t" style="left:275.20px;top:58px;font-size:10.0px;color:#333;width:53.40px;text-align:left;padding-left:3.30px;">立即</div>
<div class="t" style="left:328.60px;top:57px;font-size:9.4px;color:#333;width:66.90px;text-align:left;padding-left:3.30px;">a241121001</div>
<div class="t" style="left:395.50px;top:57px;font-size:9.4px;color:#333;width:38.30px;text-align:right;padding-right:3.40px;">3</div>
<div class="t" style="left:433.80px;top:58px;font-size:9.0px;color:#333;width:66.80px;text-align:left;padding-left:3.00px;letter-spacing:1.1px">wlbh</div>
<div class="t" style="left:500.60px;top:58px;font-size:9.0px;color:#333;width:100.50px;text-align:left;padding-left:3.00px;letter-spacing:-0.4px">mc</div>
<div class="t" style="left:601.10px;top:57px;font-size:9.4px;color:#333;width:54.00px;text-align:left;padding-left:3.30px;">2311</div>
<div class="t" style="left:655.10px;top:57px;font-size:9.4px;color:#333;width:73.10px;text-align:left;padding-left:3.30px;">35*96*47</div>
<div class="t" style="left:728.20px;top:58px;font-size:9.0px;color:#333;width:81.00px;text-align:left;padding-left:3.00px;letter-spacing:1.6px">kfth</div>
<div class="t" style="left:809.20px;top:57px;font-size:9.4px;color:#333;width:53.50px;text-align:center;">45</div>
<div class="t" style="left:929.10px;top:57px;font-size:9.4px;color:#333;width:67.50px;text-align:left;padding-left:3.30px;">bbh</div>
<div class="t" style="left:996.60px;top:57px;font-size:9.4px;color:#333;width:46.90px;text-align:center;">52</div>
<div class="t" style="left:1043.50px;top:57px;font-size:9.4px;color:#333;width:60.50px;text-align:center;">2340</div>
<div class="t" style="left:1104.00px;top:57px;font-size:9.4px;color:#333;width:58.00px;text-align:left;padding-left:3.30px;">bc</div>
<div class="t" style="left:104.70px;top:74px;font-size:7.6px;color:#141478;width:59.90px;text-align:center;font-weight:bold;-webkit-text-stroke:0.3px #141478">合计</div>
<div class="t" style="left:809.20px;top:74px;font-size:8.4px;color:#141478;width:53.50px;text-align:center;font-weight:bold;letter-spacing:-0.1px;-webkit-text-stroke:0.15px #141478">135</div>
<div class="t" style="left:1043.50px;top:74px;font-size:8.4px;color:#141478;width:60.50px;text-align:center;font-weight:bold;letter-spacing:-0.1px;-webkit-text-stroke:0.15px #141478">6885.00</div>
<svg class="a" style="left:5.00px;top:224.00px" width="5" height="6" viewBox="0 0 5 6"><path d="M4.5 0.5 L0.8 3 L4.5 5.5Z" fill="#8a8a8a"/></svg>
<div class="a" style="left:13.30px;top:223.80px;width:833.70px;height:5.80px;background:#8c8c8c;border-radius:3px"></div>
<svg class="a" style="left:1132.00px;top:224.00px" width="5" height="6" viewBox="0 0 5 6"><path d="M0.5 0.5 L4.2 3 L0.5 5.5Z" fill="#8a8a8a"/></svg>
</div>
<div class="cy" style="left:138.7px;top:555px;width:1140.3px"></div>
<div class="t" style="left:149.00px;top:570px;font-size:10.0px;color:#333;">订单号<span class="c">:</span></div>
<div class="inp" style="left:189.20px;top:565.20px;width:100.80px;height:15.60px"></div>
<div class="t" style="left:293.50px;top:570px;font-size:10.0px;color:#333;">序号<span class="c">:</span></div>
<div class="inp" style="left:323.60px;top:565.20px;width:101.20px;height:15.60px"></div>
<div class="t" style="left:428.50px;top:570px;font-size:10.0px;color:#333;">物料编号<span class="c">:</span></div>
<div class="inp" style="left:478.30px;top:565.20px;width:110.20px;height:15.60px"></div>
<div class="t" style="left:592.70px;top:570px;font-size:10.0px;color:#333;">名称<span class="c">:</span></div>
<div class="inp" style="left:622.20px;top:565.20px;width:110.50px;height:15.60px"></div>
<div class="t" style="left:736.60px;top:570px;font-size:10.0px;color:#333;">材质<span class="c">:</span></div>
<div class="inp" style="left:766.40px;top:565.20px;width:110.30px;height:15.60px"></div>
<div class="t" style="left:880.90px;top:570px;font-size:10.0px;color:#333;">规格型号<span class="c">:</span></div>
<div class="inp" style="left:931.00px;top:565.20px;width:110.50px;height:15.60px"></div>
<div class="a" style="left:138.70px;top:588.00px;width:1138.20px;height:1.80px;background:#dadada"></div>
<div class="t" style="left:138.90px;top:602px;font-size:10.0px;color:#333;">客户图号<span class="c">:</span></div>
<div class="inp" style="left:189.20px;top:596.90px;width:100.80px;height:15.60px"></div>
<div class="t" style="left:293.50px;top:602px;font-size:10.0px;color:#333;">数量<span class="c">:</span></div>
<div class="inp" style="left:323.60px;top:596.90px;width:101.20px;height:15.60px"></div>
<div class="t" style="left:448.70px;top:602px;font-size:10.0px;color:#333;">单价<span class="c">:</span></div>
<div class="inp" style="left:478.30px;top:596.90px;width:110.20px;height:15.60px"></div>
<div class="t" style="left:736.60px;top:602px;font-size:10.0px;color:#333;">备注<span class="c">:</span></div>
<div class="inp" style="left:766.40px;top:596.90px;width:110.30px;height:15.60px"></div>
<div class="t" style="left:880.90px;top:602px;font-size:10.0px;color:#333;">采购单号<span class="c">:</span></div>
<div class="inp" style="left:931.00px;top:596.90px;width:110.50px;height:15.60px"></div>
<div class="t" style="left:592.70px;top:602px;font-size:10.0px;color:#333;">单位<span class="c">:</span></div>
<div class="sel" style="left:622.20px;top:596.90px;width:110.50px;height:15.60px"><div class="sp" style="left:93.80px"></div><div class="tri" style="left:98.05px;top:5.20px"></div></div>
<div class="t" style="left:629.50px;top:601px;font-size:9.4px;color:#333;">件</div>
<div class="btn" style="left:1044.60px;top:593.00px;width:75.10px;height:23.30px"></div>
<svg class="a" style="left:1054.10px;top:600.05px" width="9.2" height="9.2" viewBox="0 0 9.2 9.2"><path d="M0.6 0.6 H7 L8.6 2.2 V8.6 H0.6Z" fill="none" stroke="#fff" stroke-width="1.2"/><rect x="2.4" y="0.6" width="3.9" height="2.6" fill="none" stroke="#fff" stroke-width="1"/><rect x="2.1" y="5.1" width="5" height="3.5" fill="none" stroke="#fff" stroke-width="1"/></svg>
<div class="t" style="left:1067.50px;top:601px;font-size:10.0px;color:#fff;">确认录入</div>
<div class="cy" style="left:138.7px;top:620.6px;width:1140.3px"></div>
<div class="t" style="left:139.00px;top:634px;font-size:10.0px;color:#333;">送货日期<span class="c">:</span></div>
<div class="inp" style="left:189.6px;top:629.2px;width:89.8px;height:16.1px"></div>
<div class="a" style="left:263.20px;top:629.20px;width:1.00px;height:16.10px;background:#dadada"></div>
<svg class="a" style="left:266px;top:632.6px" width="10.2" height="10.4" viewBox="0 0 10.2 10.4"><rect x="0.4" y="1.6" width="9.4" height="8.4" fill="#eef3f8" stroke="#6a6a6a" stroke-width="0.8"/><rect x="0.4" y="1.6" width="9.4" height="1.8" fill="#555"/><path d="M0.4 5.6 H9.8 M0.4 7.8 H9.8 M2.7 3.4 V10 M5.1 3.4 V10 M7.5 3.4 V10" stroke="#a8b4c0" stroke-width="0.6"/><path d="M2.6 0.2 V2.6 M7.6 0.2 V2.6" stroke="#555" stroke-width="1.3"/></svg>
<div class="t" style="left:196.50px;top:633px;font-size:9.4px;color:#333;">2026-01-18</div>
<div class="btn" style="left:282.80px;top:626.00px;width:92.80px;height:22.60px"></div>
<svg class="a" style="left:292.30px;top:632.70px" width="9.2" height="9.2" viewBox="0 0 9.2 9.2"><path d="M0.6 0.6 H7 L8.6 2.2 V8.6 H0.6Z" fill="none" stroke="#fff" stroke-width="1.2"/><rect x="2.4" y="0.6" width="3.9" height="2.6" fill="none" stroke="#fff" stroke-width="1"/><rect x="2.1" y="5.1" width="5" height="3.5" fill="none" stroke="#fff" stroke-width="1"/></svg>
<div class="t" style="left:305.00px;top:634px;font-size:10.0px;color:#fff;">更改送货日期</div>
<div class="t" style="left:429.90px;top:634px;font-size:10.0px;color:#333;">送货单号<span class="c">:</span></div>
<div class="inp" style="left:480.20px;top:629.50px;width:110.00px;height:16.00px"></div>
<div class="t" style="left:487.50px;top:633px;font-size:9.4px;color:#333;">S2411-0005</div>
<div class="btn" style="left:593.50px;top:626.00px;width:93.40px;height:22.60px"></div>
<svg class="a" style="left:603.00px;top:632.70px" width="9.2" height="9.2" viewBox="0 0 9.2 9.2"><path d="M0.6 0.6 H7 L8.6 2.2 V8.6 H0.6Z" fill="none" stroke="#fff" stroke-width="1.2"/><rect x="2.4" y="0.6" width="3.9" height="2.6" fill="none" stroke="#fff" stroke-width="1"/><rect x="2.1" y="5.1" width="5" height="3.5" fill="none" stroke="#fff" stroke-width="1"/></svg>
<div class="t" style="left:616.00px;top:634px;font-size:10.0px;color:#fff;">更改送货单号</div>
<div class="a" style="left:138.70px;top:651.20px;width:1138.20px;height:1.20px;background:#dadada"></div>
<div class="a" style="left:1276.00px;top:623.00px;width:1.00px;height:29.40px;background:#e2e2e2"></div>
</body></html>
